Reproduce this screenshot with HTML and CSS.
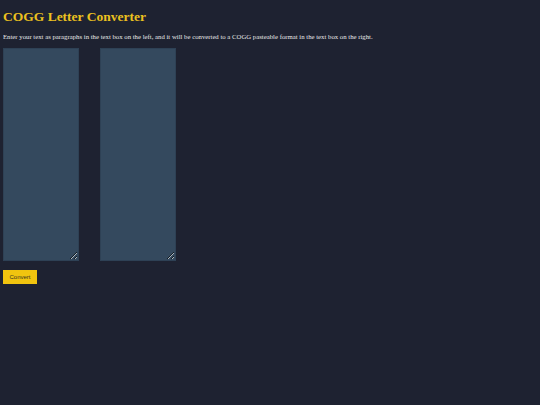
FILE: index.html
```html
<!DOCTYPE html>
<html>
<head>
<meta charset="utf-8">
<link rel="stylesheet" href="styles.css">
</head>
<body>
<h1 class="title">COGG Letter Converter</h1>
<p class="intro">Enter your text as paragraphs in the text box on the left, and it will be converted to a COGG pasteable format in the text box on the right.</p>
<div class="boxes">
  <textarea class="box"></textarea>
  <textarea class="box"></textarea>
</div>
<button class="convert">Convert</button>
</body>
</html>
```
FILE: styles.css
```css
html, body {
  background: #1e2231;
}
body {
  margin: 3px;
  font-family: "Liberation Serif", serif;
  color: #e8e8e8;
}
.title {
  font-size: 13.5px;
  font-weight: bold;
  color: #ecc11f;
  margin: 6px 0 8px;
  line-height: 16px;
}
.intro {
  font-size: 6.75px;
  margin: 0 0 7px;
  line-height: 8px;
}
.boxes {
  display: flex;
  gap: 21px;
}
.box {
  width: 76px;
  height: 213px;
  box-sizing: border-box;
  margin: 0;
  background: #34495e;
  border: 1px solid #2e4155;
  resize: both;
  padding: 0;
}
.convert {
  display: block;
  margin-top: 9px;
  width: 34px;
  height: 14px;
  padding: 0;
  background: #f1c40f;
  border: none;
  color: #3a3520;
  font-family: "Liberation Sans", sans-serif;
  font-size: 6px;
}
```
